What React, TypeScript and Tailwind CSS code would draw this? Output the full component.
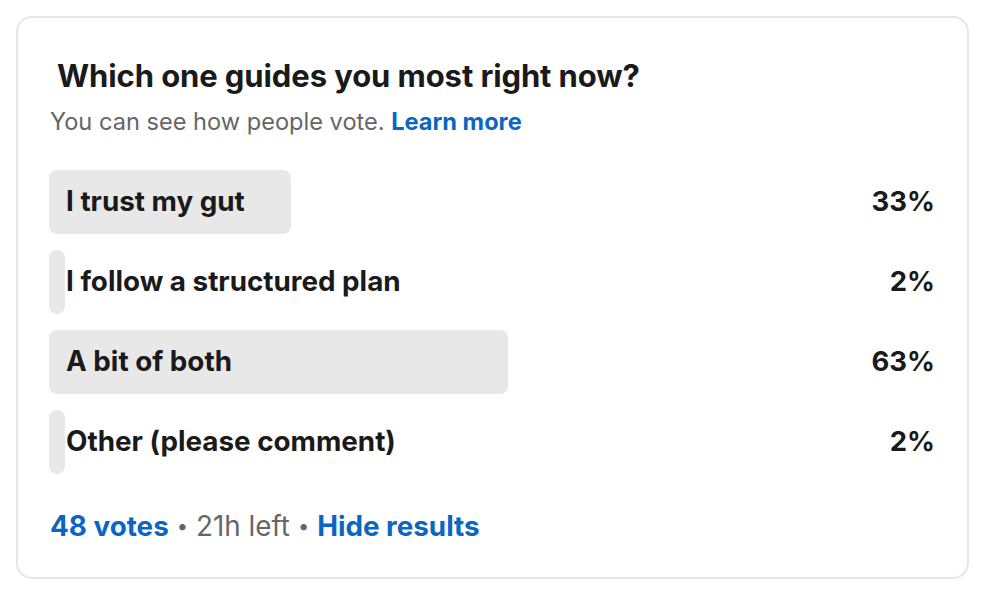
import React from "react";

const options = [
  { label: "I trust my gut", pct: 33, width: 242 },
  { label: "I follow a structured plan", pct: 2, width: 16 },
  { label: "A bit of both", pct: 63, width: 459 },
  { label: "Other (please comment)", pct: 2, width: 16 },
];

const PollCard = () => {
  return (
    <div className="ml-[16px] mt-[16px] w-[953px] h-[563px] rounded-[16px] border-2 border-[#e6e6e6] bg-white px-[31px] pt-[38px]">
      <h2 className="pl-[8px] text-[31px] leading-[40px] font-bold text-[#1a1a1a] tracking-[-0.1px]">
        Which one guides you most right now?
      </h2>
      <p className="mt-[11px] text-[23.6px] leading-[30px] text-[#666666] pl-[1px]">
        You can see how people vote.{" "}
        <span className="font-bold text-[#0a66c2]">Learn more</span>
      </p>
      <div className="mt-[33px] flex flex-col gap-[16px]">
        {options.map((o) => (
          <div key={o.label} className="relative flex h-[64px] items-center justify-between">
            <div
              className="absolute left-0 top-0 h-[64px] rounded-[8px] bg-[#e8e8e8]"
              style={{ width: o.width }}
            />
            <span className="relative pl-[17px] text-[27.8px] font-bold text-[#1a1a1a]">
              {o.label}
            </span>
            <span className="relative pr-[1px] text-[27.5px] font-bold text-[#1a1a1a]">
              {o.pct}%
            </span>
          </div>
        ))}
      </div>
      <div className="mt-[35px] flex items-center text-[27.8px] leading-[34px] pl-[1px]">
        <span className="font-bold text-[#0a66c2]">48 votes</span>
        <span className="mx-[8px] text-[#666666] text-[20px]">•</span>
        <span className="text-[#666666]">21h left</span>
        <span className="mx-[8px] text-[#666666] text-[20px]">•</span>
        <span className="font-bold text-[#0a66c2]">Hide results</span>
      </div>
    </div>
  );
};

export default function App() {
  return (
    <div className="w-[990px] h-[594px] bg-white" style={{ fontFamily: "Inter, 'Liberation Sans', sans-serif" }}>
      <PollCard />
    </div>
  );
}
